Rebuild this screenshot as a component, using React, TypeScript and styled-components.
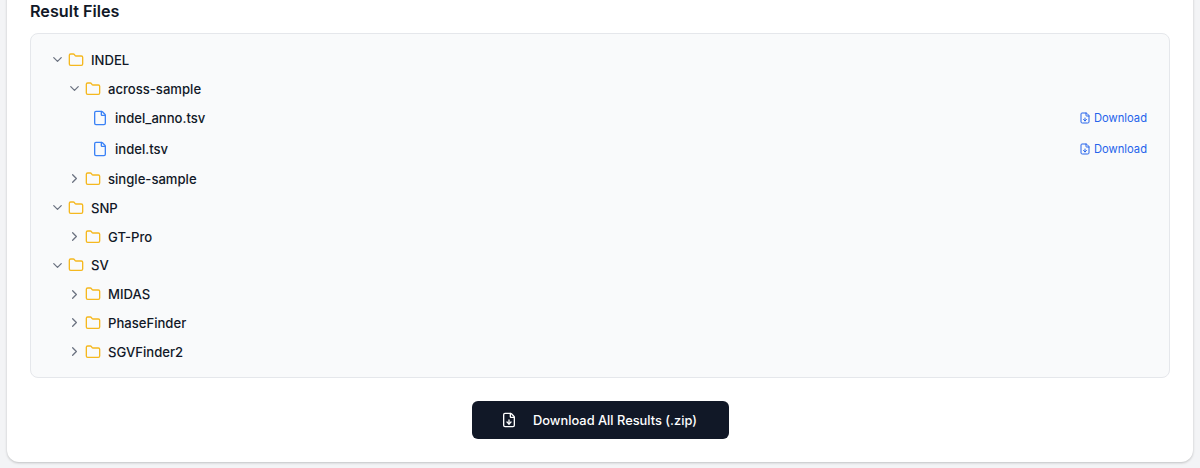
import React from "react";
import styled, { createGlobalStyle } from "styled-components";
import { ChevronDown, ChevronRight, File, FileDown, Folder } from "lucide-react";

const GlobalStyle = createGlobalStyle`
  html, body {
    margin: 0;
    height: 468px;
    overflow: hidden;
    background: #f3f4f6;
    font-family: Inter, "Liberation Sans", sans-serif;
    -webkit-font-smoothing: antialiased;
  }
`;

const Page = styled.main`
  padding: 0 7px;
`;

const Card = styled.section`
  margin-top: -20px;
  height: 482px;
  box-sizing: border-box;
  padding: 20px 23px 0;
  background: #fff;
  border-radius: 12px;
  box-shadow: 0 1px 3px rgba(0, 0, 0, 0.14), 0 1px 2px rgba(0, 0, 0, 0.08);
`;

const Title = styled.h2`
  margin: 0 0 11px;
  font-size: 16.2px;
  line-height: 22px;
  font-weight: 600;
  color: #111827;
`;

const Panel = styled.div`
  box-sizing: border-box;
  height: 345px;
  padding: 11.4px 12px 12px;
  background: #f9fafb;
  border: 1px solid #e5e7eb;
  border-radius: 8px;
`;

const Row = styled.div<{ $depth: number; $file?: boolean }>`
  display: flex;
  align-items: center;
  height: ${(p) => (p.$file ? "30.8px" : "28.8px")};
  padding-left: ${(p) => 6 + p.$depth * 17 + (p.$file ? 26 : 0)}px;
  font-size: 13.1px;
  font-weight: 500;
  color: #111827;
`;

const Toggle = styled.span`
  display: flex;
  width: 16px;
  justify-content: center;
  margin-right: 3px;
  color: #6b7280;
`;

const FolderIcon = styled(Folder)`
  color: #f5b81f;
  margin-right: 7px;
  flex: none;
`;

const FileIcon = styled(File)`
  color: #3b82f6;
  margin-right: 7px;
  flex: none;
`;

const Name = styled.span`
  flex: 1;
`;

const DownloadLink = styled.a`
  display: flex;
  align-items: center;
  gap: 3px;
  margin-right: 10px;
  font-size: 11.2px;
  font-weight: 400;
  color: #2563eb;
`;

const Footer = styled.div`
  display: flex;
  justify-content: center;
  margin-top: 23px;
`;

const DownloadAll = styled.button`
  display: flex;
  align-items: center;
  justify-content: center;
  gap: 16px;
  width: 257px;
  height: 38px;
  padding: 0 8px 0 6px;
  border: 0;
  border-radius: 6px;
  background: #111827;
  color: #fff;
  font-family: inherit;
  font-size: 12.85px;
  font-weight: 500;
`;

type Node = { name: string; depth: number; file?: boolean; open?: boolean };

const nodes: Node[] = [
  { name: "INDEL", depth: 0, open: true },
  { name: "across-sample", depth: 1, open: true },
  { name: "indel_anno.tsv", depth: 1, file: true },
  { name: "indel.tsv", depth: 1, file: true },
  { name: "single-sample", depth: 1 },
  { name: "SNP", depth: 0, open: true },
  { name: "GT-Pro", depth: 1 },
  { name: "SV", depth: 0, open: true },
  { name: "MIDAS", depth: 1 },
  { name: "PhaseFinder", depth: 1 },
  { name: "SGVFinder2", depth: 1 },
];

function TreeRow({ node }: { node: Node }) {
  if (node.file) {
    return (
      <Row $depth={node.depth} $file>
        <FileIcon size={16} strokeWidth={2} />
        <Name>{node.name}</Name>
        <DownloadLink>
          <FileDown size={12} />
          Download
        </DownloadLink>
      </Row>
    );
  }
  return (
    <Row $depth={node.depth}>
      <Toggle>
        {node.open ? <ChevronDown size={15} /> : <ChevronRight size={15} />}
      </Toggle>
      <FolderIcon size={16} strokeWidth={2} />
      <Name>{node.name}</Name>
    </Row>
  );
}

export default function App() {
  return (
    <Page>
      <GlobalStyle />
      <Card>
        <Title>Result Files</Title>
        <Panel>
          {nodes.map((node) => (
            <TreeRow key={node.name} node={node} />
          ))}
        </Panel>
        <Footer>
          <DownloadAll>
            <FileDown size={16} />
            Download All Results (.zip)
          </DownloadAll>
        </Footer>
      </Card>
    </Page>
  );
}
